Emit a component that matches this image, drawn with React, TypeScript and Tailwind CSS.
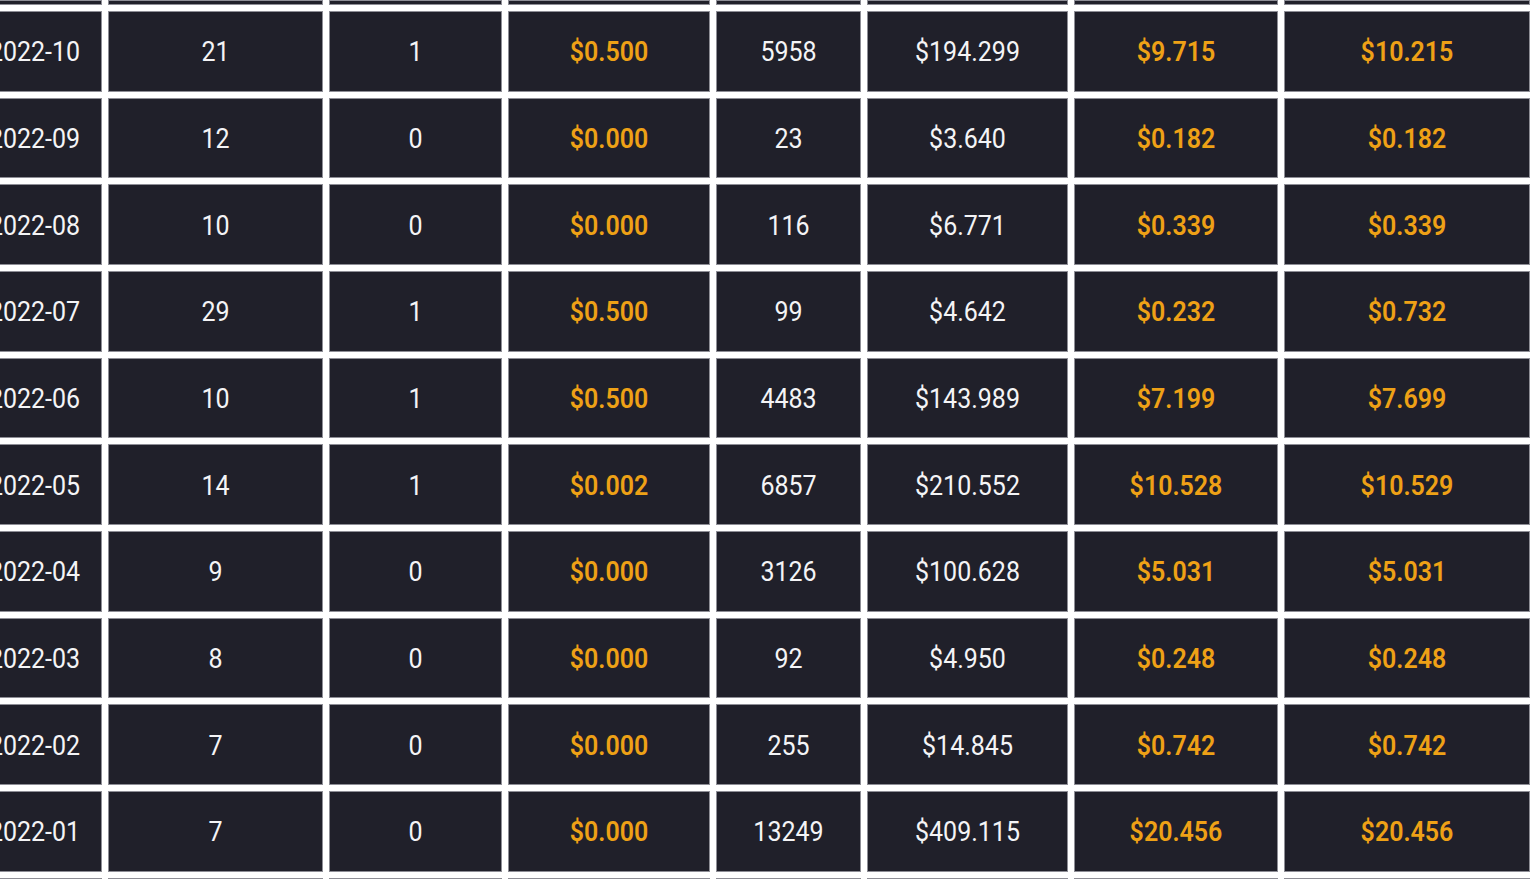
import React from "react";

const rows: string[][] = [
  ["2022-10", "21", "1", "$0.500", "5958", "$194.299", "$9.715", "$10.215"],
  ["2022-09", "12", "0", "$0.000", "23", "$3.640", "$0.182", "$0.182"],
  ["2022-08", "10", "0", "$0.000", "116", "$6.771", "$0.339", "$0.339"],
  ["2022-07", "29", "1", "$0.500", "99", "$4.642", "$0.232", "$0.732"],
  ["2022-06", "10", "1", "$0.500", "4483", "$143.989", "$7.199", "$7.699"],
  ["2022-05", "14", "1", "$0.002", "6857", "$210.552", "$10.528", "$10.529"],
  ["2022-04", "9", "0", "$0.000", "3126", "$100.628", "$5.031", "$5.031"],
  ["2022-03", "8", "0", "$0.000", "92", "$4.950", "$0.248", "$0.248"],
  ["2022-02", "7", "0", "$0.000", "255", "$14.845", "$0.742", "$0.742"],
  ["2022-01", "7", "0", "$0.000", "13249", "$409.115", "$20.456", "$20.456"],
];

const orange = new Set([3, 6, 7]);

function Cell({ text, col, h }: { text?: string; col: number; h: string }) {
  return (
    <div
      className={`${h} bg-[#20202a] border border-[#8e8e96] flex items-center justify-center whitespace-nowrap pt-[1px] ${
        orange.has(col) ? "text-[#eea116] font-semibold" : "text-[#f4f4f6] font-normal"
      }`}
    >
      {text ? <span className="inline-block scale-y-[1.1]">{text}</span> : null}
    </div>
  );
}

export default function App() {
  const blank = Array.from({ length: 8 }, (_, i) => i);
  return (
    <div className="w-[1536px] h-[879px] overflow-hidden bg-white">
      <div
        className="-ml-[33px] grid grid-cols-[135px_215px_173px_202px_145px_201px_204px_246px] gap-[6px] text-[25px] leading-none"
        style={{ fontFamily: "Roboto, 'Liberation Sans', sans-serif" }}
      >
        {blank.map((c) => (
          <Cell key={`top-${c}`} col={c} h="h-[5px]" />
        ))}
        {rows.map((r, ri) =>
          r.map((t, ci) => <Cell key={`${ri}-${ci}`} text={t} col={ci} h="h-[80.67px]" />)
        )}
        {blank.map((c) => (
          <Cell key={`bot-${c}`} col={c} h="h-[40px]" />
        ))}
      </div>
    </div>
  );
}
